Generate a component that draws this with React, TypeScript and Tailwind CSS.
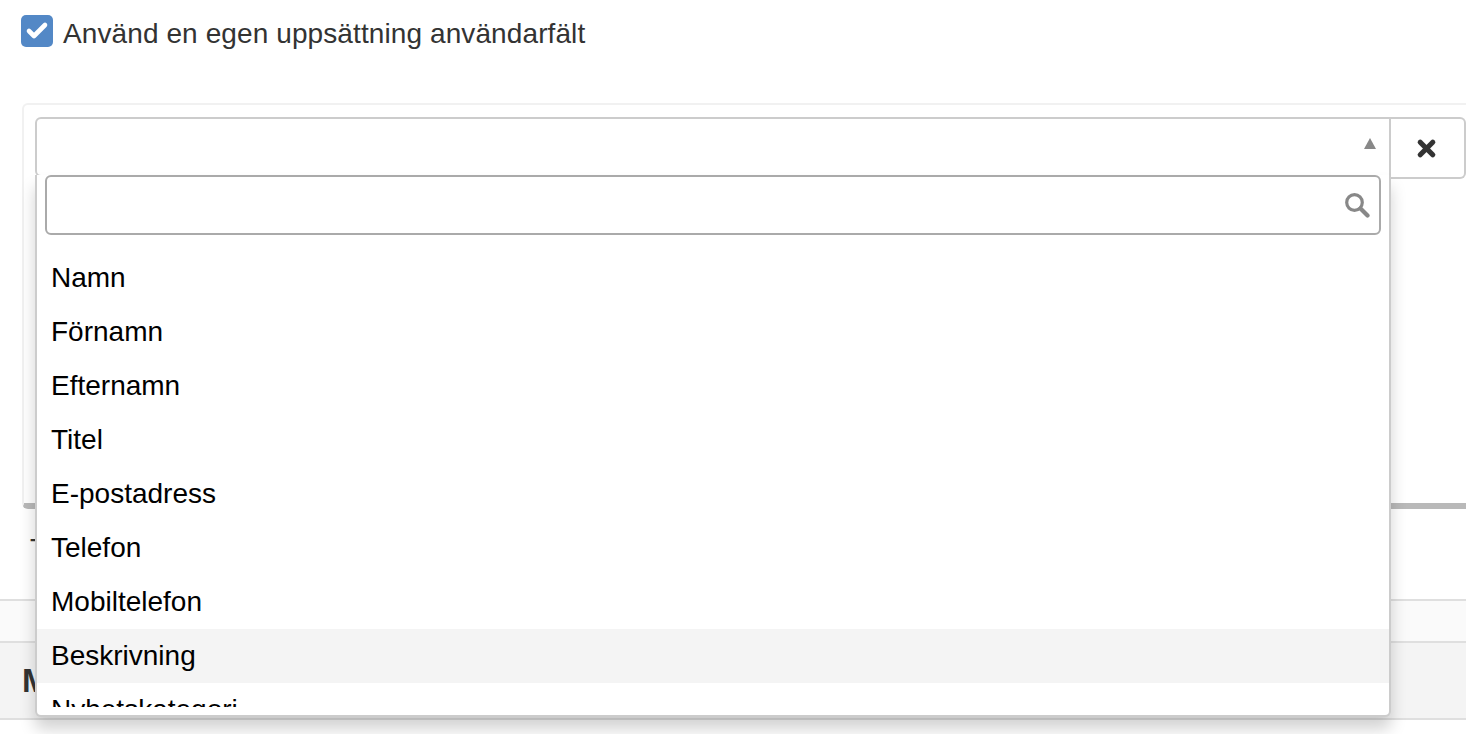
import { Check, X } from "lucide-react";

const options = ["Namn", "Förnamn", "Efternamn", "Titel", "E-postadress", "Telefon", "Mobiltelefon", "Beskrivning", "Nyhetskategori"];

export default function App() {
  return (
    <div className="relative h-[734px] w-[1466px] overflow-hidden bg-white font-['Liberation_Sans',Arial,sans-serif] text-[#333]">
      <label className="flex h-[62px] items-center pl-[21px]">
        <span className="flex h-8 w-8 items-center justify-center rounded-[5px] bg-[#5388c6]">
          <Check size={24} strokeWidth={4.6} className="text-white" />
        </span>
        <span className="ml-[10px] mt-[6px] text-[28px] leading-8 tracking-[0.1px]">Använd en egen uppsättning användarfält</span>
      </label>

      <div className="ml-[22px] mt-[41px] h-[406px] rounded-l-[6px] border-2 border-r-0 border-b-[6px] border-[#f1f1f1] border-b-[#b9b9b9] pl-[11px] pt-3">
        <div className="flex items-start">
          <div className="flex h-[60px] flex-1 items-center justify-end rounded-l-[6px] border-2 border-[#cccccc] pr-[13px]">
            <span className="mb-2 h-0 w-0 border-x-[6px] border-b-[11px] border-x-transparent border-b-[#888888]" />
          </div>
          <button className="flex h-[62px] w-[75px] items-center justify-center rounded-r-[6px] border-2 border-l-0 border-[#cccccc] pr-[2px]">
            <X size={25} strokeWidth={5} className="text-[#333]" />
          </button>
        </div>
      </div>

      <div className="h-[90px] pl-[30px] pt-[24px] text-[28px] leading-8">T</div>
      <div className="h-[44px] border-y-2 border-[#dfdfdf] bg-[#fafafa]" />
      <div className="flex h-[77px] items-center border-b-2 border-[#dfdfdf] bg-[#f4f4f4] pl-[22px] text-[33px] font-bold leading-none">M</div>

      <div className="absolute left-[35px] top-[175px] h-[542px] w-[1356px] rounded-b-[6px] border-x-2 border-b-2 border-[#cccccc] bg-white shadow-[0_12px_16px_rgba(0,0,0,0.18)]">
        <div className="pl-2">
          <div className="flex h-[60px] w-[1336px] items-center justify-end rounded-[6px] border-2 border-[#aaaaaa] bg-white pr-[9px]">
            <svg width="26" height="26" viewBox="0 0 26 26" fill="none" stroke="#888888">
              <circle cx="10.5" cy="10.5" r="7.8" strokeWidth="3.2" />
              <path d="M16.5 16.5 L23.5 23.5" strokeWidth="4.2" strokeLinecap="round" />
            </svg>
          </div>
        </div>
        <ul className="mt-4 h-[456px] overflow-hidden text-[28px] leading-[54px] text-black">
          {options.map((o) => (
            <li key={o} className={o === "Beskrivning" ? "h-[54px] bg-[#f4f4f4] pl-[14px]" : "h-[54px] pl-[14px]"}>
              {o}
            </li>
          ))}
        </ul>
      </div>
    </div>
  );
}
